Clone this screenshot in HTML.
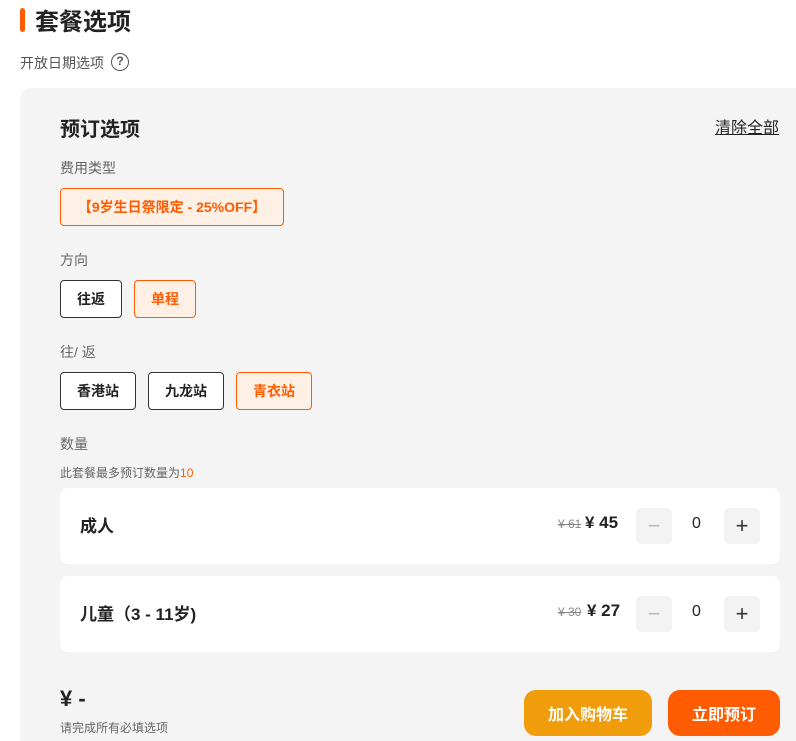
<!DOCTYPE html>
<html style="width:796px;height:741px;overflow:hidden"><head><meta charset="utf-8"><style>
*{margin:0;padding:0;box-sizing:border-box}
body{width:796px;height:741px;overflow:hidden;background:#fff;font-family:"Liberation Sans","Noto Sans CJK SC",sans-serif;color:#222;position:relative}
.a{position:absolute}
.btn{position:absolute;height:38px;border:1px solid #333;border-radius:4px;background:#fff;font-size:14px;font-weight:bold;display:flex;align-items:center;justify-content:center;color:#222}
.sel{border-color:#ff5b00;background:#fff0e6;color:#ff5b00}
.lbl{position:absolute;left:60px;font-size:14px;color:#666}
.row{position:absolute;left:60px;width:720px;height:76px;background:#fff;border-radius:8px}
.sq{position:absolute;width:36px;height:36px;border-radius:5px;background:#f3f3f3;font-size:22px;display:flex;align-items:center;justify-content:center}
</style></head><body>
<div class="a" style="left:20px;top:8px;width:5px;height:24px;background:#ff5b00;border-radius:3px"></div>
<div class="a" style="left:35px;top:2px;font-size:24px;font-weight:bold;color:#222">套餐选项</div>
<div class="a" style="left:20px;top:53px;font-size:14px;color:#555">开放日期选项</div>
<div class="a" style="left:111px;top:53px;width:18px;height:18px;border:1.5px solid #555;border-radius:50%;font-size:12px;color:#555;text-align:center;line-height:15px;font-weight:bold">?</div>
<div class="a" style="left:20px;top:88px;width:776px;height:653px;background:#f4f4f4;border-radius:12px 0 0 0"></div>
<div class="a" style="left:60px;top:113px;font-size:20px;font-weight:bold;color:#222">预订选项</div>
<div class="a" style="left:715px;top:114px;font-size:16px;color:#222;text-decoration:underline">清除全部</div>
<div class="lbl" style="top:158px">费用类型</div>
<div class="btn sel" style="left:60px;top:188px;width:224px">【9岁生日祭限定 - 25%OFF】</div>
<div class="lbl" style="top:250px">方向</div>
<div class="btn" style="left:60px;top:280px;width:62px">往返</div>
<div class="btn sel" style="left:134px;top:280px;width:62px">单程</div>
<div class="lbl" style="top:342px">往/ 返</div>
<div class="btn" style="left:60px;top:372px;width:76px">香港站</div>
<div class="btn" style="left:148px;top:372px;width:76px">九龙站</div>
<div class="btn sel" style="left:236px;top:372px;width:76px">青衣站</div>
<div class="lbl" style="top:434px">数量</div>
<div class="a" style="left:60px;top:464px;font-size:12px;color:#666">此套餐最多预订数量为<span style="color:#ff5b00">10</span></div>
<div class="row" style="top:488px"></div>
<div class="a" style="left:80px;top:512px;font-size:17px;font-weight:bold">成人</div>
<div class="a" style="left:558px;top:517px;font-size:12px;color:#888;text-decoration:line-through">¥ 61</div>
<div class="a" style="left:585px;top:513px;font-size:17px;font-weight:bold">¥ 45</div>
<div class="sq" style="left:636px;top:508px;color:#bbb">−</div>
<div class="a" style="left:692px;top:515px;font-size:16px">0</div>
<div class="sq" style="left:724px;top:508px;color:#333">+</div>
<div class="row" style="top:576px"></div>
<div class="a" style="left:80px;top:600px;font-size:17px;font-weight:bold">儿童（3 - 11岁)</div>
<div class="a" style="left:558px;top:605px;font-size:12px;color:#888;text-decoration:line-through">¥ 30</div>
<div class="a" style="left:587px;top:601px;font-size:17px;font-weight:bold">¥ 27</div>
<div class="sq" style="left:636px;top:596px;color:#bbb">−</div>
<div class="a" style="left:692px;top:603px;font-size:16px">0</div>
<div class="sq" style="left:724px;top:596px;color:#333">+</div>
<div class="a" style="left:60px;top:686px;font-size:22px;font-weight:bold">¥ -</div>
<div class="a" style="left:60px;top:719px;font-size:12px;color:#666">请完成所有必填选项</div>
<div class="a" style="left:524px;top:690px;width:128px;height:46px;background:#f09c0b;border-radius:12px;color:#fff;font-size:16px;font-weight:bold;display:flex;align-items:center;justify-content:center">加入购物车</div>
<div class="a" style="left:668px;top:690px;width:112px;height:46px;background:#ff5b00;border-radius:12px;color:#fff;font-size:16px;font-weight:bold;display:flex;align-items:center;justify-content:center">立即预订</div>
</body></html>
